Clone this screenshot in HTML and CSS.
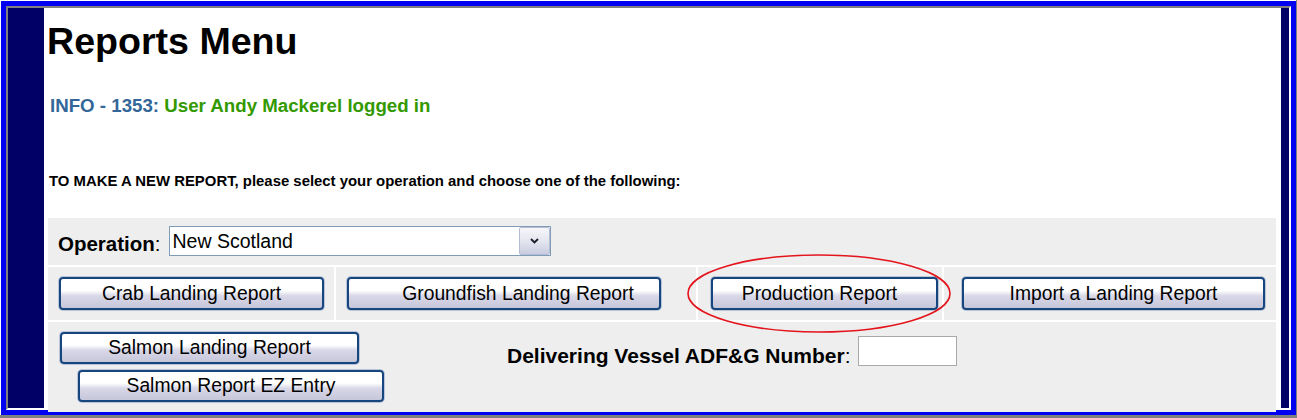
FILE: index.html
```html
<!DOCTYPE html>
<html lang="en">

<head>
    <meta charset="UTF-8">
    <meta name="viewport" content="width=device-width, initial-scale=1.0">
    <title>Reports Menu</title>
    <link rel="stylesheet" href="styles.css">
</head>

<body>
    <div class="outer">
        <div class="frame">
            <div class="inner">
                <div class="sidebar"></div>
                <div class="main">
                    <h1 class="title">Reports Menu</h1>
                    <p class="info"><span class="info-code">INFO - 1353:</span> <span class="info-msg">User Andy Mackerel logged in</span></p>
                    <p class="lead">TO MAKE A NEW REPORT, please select your operation and choose one of the following:</p>

                    <div class="form">
                        <div class="row-op">
                            <label class="label"><b>Operation</b>:</label>
                            <div class="select">
                                <span class="select-text">New Scotland</span>
                                <span class="select-btn">
                                    <svg width="9" height="6" viewBox="0 0 9 6">
                                        <path d="M1 1 L4.5 4.5 L8 1" fill="none" stroke="#1a1a2a" stroke-width="1.8"/>
                                    </svg>
                                </span>
                            </div>
                        </div>

                        <div class="row-btns">
                            <div class="cell"><a href="javascript:;" class="btn btn-crab">Crab Landing Report</a></div>
                            <div class="cell"><a href="javascript:;" class="btn btn-ground">Groundfish Landing Report</a></div>
                            <div class="cell"><a href="javascript:;" class="btn btn-prod">Production Report</a></div>
                            <div class="cell"><a href="javascript:;" class="btn btn-import">Import a Landing Report</a></div>
                        </div>

                        <div class="row-salmon">
                            <div class="salmon-col">
                                <a href="javascript:;" class="btn btn-salmon">Salmon Landing Report</a>
                                <a href="javascript:;" class="btn btn-ez">Salmon Report EZ Entry</a>
                            </div>
                            <div class="vessel">
                                <label class="label vessel-label"><b>Delivering Vessel ADF&amp;G Number</b>:</label>
                                <input type="text" class="vessel-input">
                            </div>
                        </div>
                    </div>

                    <svg class="mark" width="266" height="81" viewBox="0 0 266 81">
                        <ellipse cx="133" cy="40.5" rx="131" ry="38.5" fill="none" stroke="#e3141c" stroke-width="1.6"/>
                    </svg>
                </div>
                <div class="sidebar-right"></div>
            </div>
        </div>
    </div>
</body>

</html>
```

FILE: styles.css
```css
* {
    margin: 0;
    padding: 0;
    box-sizing: border-box;
}

html,
body {
    background-color: #fff;
    font-family: "Liberation Sans", Arial, sans-serif;
    color: #000;
}

.outer {
    width: 1297px;
    height: 418px;
    padding: 1px 0 0 1px;
    border-right: 1px solid #7f7f7f;
    border-bottom: 3px solid #7f7f7f;
}

.frame {
    height: 100%;
    border: 5px solid #0000f0;
}

.inner {
    display: flex;
    height: 100%;
    border-style: solid;
    border-width: 2px;
    border-color: #808080 #fff #fff #808080;
}

.sidebar {
    width: 36px;
    background-color: #000066;
}

.sidebar-right {
    width: 8px;
    background-color: #000066;
}

.main {
    position: relative;
    flex: 1;
    display: flex;
    flex-direction: column;
    padding: 12px 5px 0 4px;
    background-color: #fff;
}

.title {
    margin-left: -1px;
    font-size: 37.6px;
    line-height: 42px;
    font-weight: bold;
}

.info {
    margin: 33px 0 0 2px;
    font-size: 18.7px;
    line-height: 22px;
    font-weight: bold;
}

.info-code {
    color: #336699;
}

.info-msg {
    color: #339900;
}

.lead {
    margin: 55px 0 0 1px;
    font-size: 14.9px;
    line-height: 18px;
    font-weight: bold;
}

.form {
    flex: 1;
    display: flex;
    flex-direction: column;
    gap: 2px;
    margin-top: 28px;
    background-color: #fff;
}

.label {
    font-size: 20.5px;
    line-height: 24px;
}

/* operation row */
.row-op {
    display: flex;
    align-items: flex-end;
    height: 47px;
    padding: 0 10px 9px;
    background-color: #eeeeee;
}

.select {
    display: flex;
    align-items: center;
    width: 382px;
    height: 30px;
    margin-left: 8px;
    border: 1px solid #7f9db9;
    background-color: #fff;
}

.select-text {
    flex: 1;
    padding-left: 3px;
    font-size: 19.5px;
}

.select-btn {
    display: flex;
    align-items: center;
    justify-content: center;
    width: 31px;
    height: 28px;
    border: 1px solid #b6bdd2;
    border-radius: 2px;
    background: linear-gradient(#f6f6fa, #e4e6ef 50%, #c9cce0);
}

/* buttons */
.btn {
    display: flex;
    align-items: center;
    justify-content: center;
    height: 33px;
    border: 2px solid #17457e;
    border-radius: 4px;
    background: linear-gradient(#ffffff 0%, #ffffff 40%, #d8d8e8 58%, #c6c6da 100%);
    box-shadow: 0 0 0 1px #b8c4d8;
    font-size: 19.3px;
    color: #000;
    text-decoration: none;
}

.row-btns {
    display: grid;
    grid-template-columns: 286px 360px 244px 1fr;
    gap: 2px;
    height: 53px;
}

.cell {
    display: flex;
    align-items: center;
    background-color: #eeeeee;
}

.btn-crab {
    width: 265px;
    margin-left: 11px;
}

.btn-ground {
    width: 314px;
    margin-left: 11px;
    padding-left: 28px;
}

.btn-prod {
    width: 227px;
    margin-left: 13px;
    padding-right: 10px;
}

.btn-import {
    width: 303px;
    margin-left: 18px;
}

/* salmon row */
.row-salmon {
    flex: 1;
    display: flex;
    padding: 10px 12px;
    background-color: #eeeeee;
}

.salmon-col {
    display: flex;
    flex-direction: column;
    gap: 6px;
    width: 330px;
}

.btn-salmon {
    width: 299px;
    height: 32px;
}

.btn-ez {
    width: 306px;
    height: 32px;
    margin-left: 18px;
}

.vessel {
    display: flex;
    align-items: flex-end;
    height: 30px;
    margin: 4px 0 0 117px;
}

.vessel-label {
    margin-bottom: -2px;
    font-size: 21px;
}

.vessel-input {
    width: 99px;
    height: 30px;
    margin-left: 7px;
    border: 1px solid #a9a9a9;
    background-color: #fff;
}

/* red annotation ring */
.mark {
    position: absolute;
    left: 642px;
    top: 245px;
}
```
